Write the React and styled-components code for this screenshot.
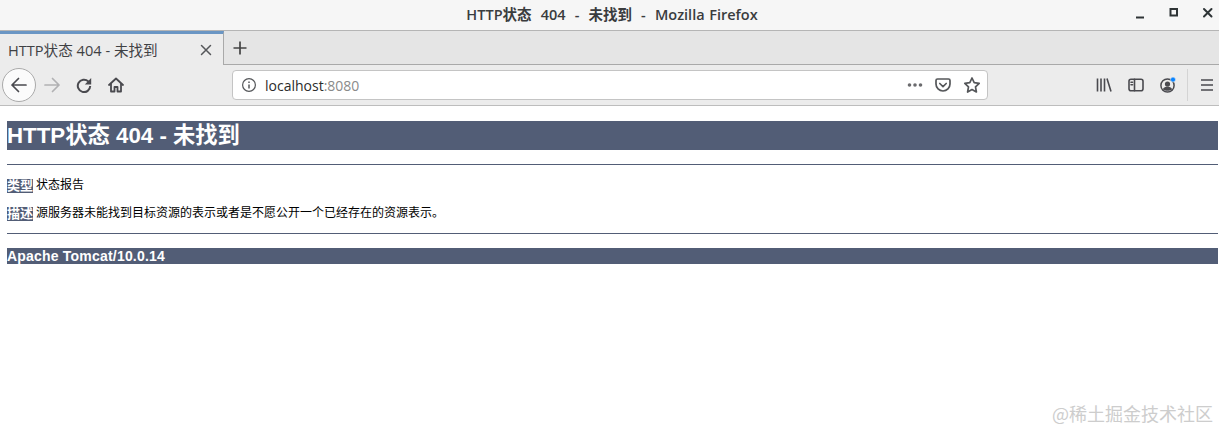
import React from 'react';
import styled, { createGlobalStyle } from 'styled-components';

const GlobalStyle = createGlobalStyle`
  html, body {
    margin: 0;
    padding: 0;
    background: #fff;
  }
  body {
    width: 1219px;
    height: 431px;
    overflow: hidden;
    font-family: "Liberation Sans", "Noto Sans CJK SC", sans-serif;
  }
`;

const Page = styled.div`
  position: relative;
  width: 1219px;
  height: 431px;
  overflow: hidden;
`;

const TitleBar = styled.div`
  height: 30px;
  background: #f6f6f6;
  border-bottom: 1px solid #b5b5b5;
  display: flex;
  align-items: center;
  justify-content: center;
  position: relative;
  box-sizing: content-box;
`;
const WindowTitle = styled.div`
  font-family: "Open Sans", "Noto Sans CJK SC", sans-serif;
  font-size: 14.5px;
  font-weight: 600;
  color: #3a3c3e;
  white-space: pre;
  word-spacing: 0.8px;
  margin: -4px 0 0 5px;
`;
const WindowButtons = styled.div`
  position: absolute;
  right: -6px;
  top: 0;
  height: 30px;
  display: flex;
`;
const WindowButton = styled.div`
  width: 34px;
  height: 26px;
  display: flex;
  align-items: center;
  justify-content: center;
  svg {
    display: block;
  }
`;

const TabStrip = styled.div`
  height: 33px;
  background: #e5e5e5;
  border-bottom: 1px solid #a9a9a9;
  display: flex;
`;
const Tab = styled.div`
  width: 224px;
  height: 34px;
  box-sizing: border-box;
  background: #ececec;
  border-top: 3px solid #6a96c4;
  border-right: 1px solid #a9a9a9;
  padding: 0 4px 0 8px;
  display: flex;
  align-items: center;
  justify-content: space-between;
`;
const TabTitle = styled.span`
  font-family: "Open Sans", "Noto Sans CJK SC", sans-serif;
  font-size: 14.6px;
  color: #3f4144;
  white-space: nowrap;
`;
const TabIcon = styled.div`
  width: 26px;
  height: 30px;
  display: flex;
  align-items: center;
  justify-content: center;
`;
const NewTab = styled(TabIcon)`
  width: 32px;
  height: 33px;
`;

const NavBar = styled.div`
  height: 40px;
  background: #ececec;
  border-bottom: 1px solid #bdbdbd;
  display: flex;
  align-items: center;
  padding-left: 2px;
`;
const BackButton = styled.div`
  width: 32px;
  height: 32px;
  border-radius: 50%;
  background: #fbfbfb;
  border: 1px solid #aaa;
  display: flex;
  align-items: center;
  justify-content: center;
  flex-shrink: 0;
`;
const NavIcon = styled.div`
  width: 32px;
  height: 32px;
  display: flex;
  align-items: center;
  justify-content: center;
  flex-shrink: 0;
`;
const NavIcons = styled.div`
  display: flex;
  margin-right: 100px;
`;
const UrlBar = styled.div`
  width: 756px;
  height: 30px;
  box-sizing: border-box;
  background: #fff;
  border: 1px solid #c4c4c4;
  border-radius: 4px;
  display: flex;
  align-items: center;
  padding: 0 3px 0 8px;
  flex-shrink: 0;
`;
const UrlText = styled.div`
  font-family: "Open Sans", sans-serif;
  font-size: 14px;
  color: #2b2b2b;
  margin-left: 8px;
  flex: 1;
  span {
    color: #8a8a8a;
  }
`;
const UrlIcon = styled.div`
  width: 24px;
  height: 24px;
  display: flex;
  align-items: center;
  justify-content: center;
  margin-left: ${(p) => p.$gap || 0}px;
`;
const RightTools = styled.div`
  display: flex;
  align-items: center;
  margin-left: 100px;
`;
const ToolIcon = styled.div`
  width: 32px;
  height: 32px;
  display: flex;
  align-items: center;
  justify-content: center;
`;
const ToolDivider = styled.div`
  width: 1px;
  height: 32px;
  background: #d4d4d4;
  margin: 0 3px 0 3px;
`;

const Content = styled.div`
  padding: 15px 1px 0 7px;
  color: #000;
`;
const Heading = styled.h1`
  margin: 0;
  height: 29px;
  line-height: 29px;
  background: #525d76;
  color: #fff;
  font-size: 22.3px;
  font-weight: bold;
  white-space: nowrap;
`;
const Rule = styled.div`
  height: 1px;
  background: #525d76;
  margin-top: ${(p) => p.$top}px;
`;
const Line = styled.p`
  margin: ${(p) => p.$top}px 0 0;
  height: 15px;
  line-height: 15px;
  font-size: 12px;
  white-space: nowrap;
  display: flex;
  align-items: center;
`;
const Label = styled.b`
  background: #525d76;
  color: #fff;
  font-size: 13px;
  margin-right: 3px;
  height: 14px;
  line-height: 14px;
`;
const Footer = styled.h3`
  margin: 14px 0 0;
  height: 16px;
  line-height: 16px;
  background: #525d76;
  color: #fff;
  font-size: 14px;
  font-weight: bold;
  letter-spacing: 0.2px;
`;

const Watermark = styled.div`
  position: absolute;
  right: 6px;
  bottom: 7px;
  font-family: "Noto Sans CJK SC", sans-serif;
  font-size: 18px;
  line-height: 22px;
  color: #cdcdcd;
`;

const Ico = ({ w = 16, h = 16, children, color = '#4a4a4f', sw = 1.6 }) => (
  <svg
    width={w}
    height={h}
    viewBox={`0 0 ${w} ${h}`}
    fill="none"
    stroke={color}
    strokeWidth={sw}
    strokeLinecap="round"
    strokeLinejoin="round"
  >
    {children}
  </svg>
);

export default function App() {
  return (
    <Page>
      <GlobalStyle />
      <TitleBar>
        <WindowTitle>HTTP状态  404  -  未找到  -  Mozilla Firefox</WindowTitle>
        <WindowButtons>
          <WindowButton>
            <Ico w={12} h={12} color="#2e3436" sw={2}>
              <path d="M2 10.5h8" strokeLinecap="butt" />
            </Ico>
          </WindowButton>
          <WindowButton>
            <Ico w={12} h={12} color="#2e3436" sw={2}>
              <rect x="2.5" y="2" width="6.5" height="6.5" strokeLinejoin="miter" />
            </Ico>
          </WindowButton>
          <WindowButton>
            <Ico w={12} h={12} color="#2e3436" sw={2}>
              <path d="M2 2l7.5 7.5M9.5 2L2 9.5" />
            </Ico>
          </WindowButton>
        </WindowButtons>
      </TitleBar>

      <TabStrip>
        <Tab>
          <TabTitle>HTTP状态 404 - 未找到</TabTitle>
          <TabIcon>
            <Ico w={12} h={12} color="#55575a" sw={1.5}>
              <path d="M1.5 1.5l9 9M10.5 1.5l-9 9" />
            </Ico>
          </TabIcon>
        </Tab>
        <NewTab>
          <Ico w={16} h={16} color="#444" sw={1.7}>
            <path d="M8 1.5v13M1.5 8h13" strokeLinecap="butt" />
          </Ico>
        </NewTab>
      </TabStrip>

      <NavBar>
        <BackButton>
          <Ico w={18} h={18} color="#4a4a4f" sw={1.7}>
            <path d="M16 9H2M8.5 2.5L2 9l6.5 6.5" />
          </Ico>
        </BackButton>
        <NavIcons>
          <NavIcon>
            <Ico w={18} h={18} color="#b1b1b3" sw={1.7}>
              <path d="M2 9h14M9.5 2.5L16 9l-6.5 6.5" />
            </Ico>
          </NavIcon>
          <NavIcon>
            <Ico w={16} h={16} color="#4a4a4f" sw={2}>
              <path d="M14.2 9a6.2 6.2 0 1 1-1.9-4.6L13.6 5.6" strokeLinecap="butt" />
              <path d="M15.2 1v6.4H8.8z" fill="#4a4a4f" stroke="none" />
            </Ico>
          </NavIcon>
          <NavIcon>
            <Ico w={16} h={16} color="#4a4a4f" sw={1.8}>
              <path d="M1 8l7-6.5L15 8" />
              <path d="M3 7v7.5h3.5V10h3v4.5H13V7" />
            </Ico>
          </NavIcon>
        </NavIcons>
        <UrlBar>
          <Ico w={16} h={16} color="#55575a" sw={1.2}>
            <circle cx="8" cy="8" r="6.4" />
            <path d="M8 7.4v4" strokeWidth="1.5" strokeLinecap="butt" />
            <path d="M8 4.4v1.5" strokeWidth="1.5" strokeLinecap="butt" />
          </Ico>
          <UrlText>
            localhost<span>:8080</span>
          </UrlText>
          <UrlIcon>
            <Ico w={16} h={16} color="#6b6b6e" sw={0}>
              <circle cx="2.5" cy="8" r="1.8" fill="#6b6b6e" />
              <circle cx="8" cy="8" r="1.8" fill="#6b6b6e" />
              <circle cx="13.5" cy="8" r="1.8" fill="#6b6b6e" />
            </Ico>
          </UrlIcon>
          <UrlIcon $gap={4}>
            <Ico w={16} h={16} color="#55575a" sw={1.7}>
              <path d="M2.5 2h11A1.5 1.5 0 0 1 15 3.5V7a7 7 0 0 1-14 0V3.5A1.5 1.5 0 0 1 2.5 2z" />
              <path d="M4.8 6.5L8 9.6l3.2-3.1" />
            </Ico>
          </UrlIcon>
          <UrlIcon $gap={5}>
            <Ico w={18} h={18} color="#55575a" sw={1.7}>
              <path d="M9 2l2.2 4.7 5 .7-3.7 3.5.9 5.1L9 13.5 4.6 16l.9-5.1L1.8 7.4l5-.7z" />
            </Ico>
          </UrlIcon>
        </UrlBar>
        <RightTools>
          <ToolIcon>
            <Ico w={16} h={16} color="#4a4a4f" sw={1.6}>
              <path d="M1.5 1.5v13M5 1.5v13M8.5 1.5v13M11 1.5l4 13" strokeLinecap="butt" />
            </Ico>
          </ToolIcon>
          <ToolIcon>
            <Ico w={16} h={16} color="#4a4a4f" sw={1.6}>
              <rect x="1" y="2.2" width="14" height="11.6" rx="2" />
              <path d="M6.5 2.2v11.6M3 5.2h1.5M3 7.8h1.5" />
            </Ico>
          </ToolIcon>
          <ToolIcon>
            <svg width="18" height="18" viewBox="0 0 18 18" fill="none">
              <circle cx="8.5" cy="9.5" r="6.6" stroke="#4a4a4f" strokeWidth="1.5" />
              <circle cx="8.5" cy="8" r="2.6" fill="#4a4a4f" />
              <path d="M3.8 13.2c1-2 2.7-2.8 4.7-2.8s3.7.8 4.7 2.8c-2.6 2.2-6.8 2.2-9.4 0z" fill="#4a4a4f" />
              <circle cx="14" cy="3.6" r="2.5" fill="#0a84ff" stroke="#ececec" strokeWidth="0.6" />
            </svg>
          </ToolIcon>
          <ToolDivider />
          <ToolIcon>
            <Ico w={14} h={14} color="#4a4a4f" sw={1.7}>
              <path d="M1 2h12M1 7h12M1 12h12" strokeLinecap="butt" />
            </Ico>
          </ToolIcon>
        </RightTools>
      </NavBar>

      <Content>
        <Heading>HTTP状态 404 - 未找到</Heading>
        <Rule $top={14} />
        <Line $top={13}>
          <Label>类型</Label>状态报告
        </Line>
        <Line $top={13}>
          <Label>描述</Label>源服务器未能找到目标资源的表示或者是不愿公开一个已经存在的资源表示。
        </Line>
        <Rule $top={12} />
        <Footer>Apache Tomcat/10.0.14</Footer>
      </Content>

      <Watermark>@稀土掘金技术社区</Watermark>
    </Page>
  );
}
